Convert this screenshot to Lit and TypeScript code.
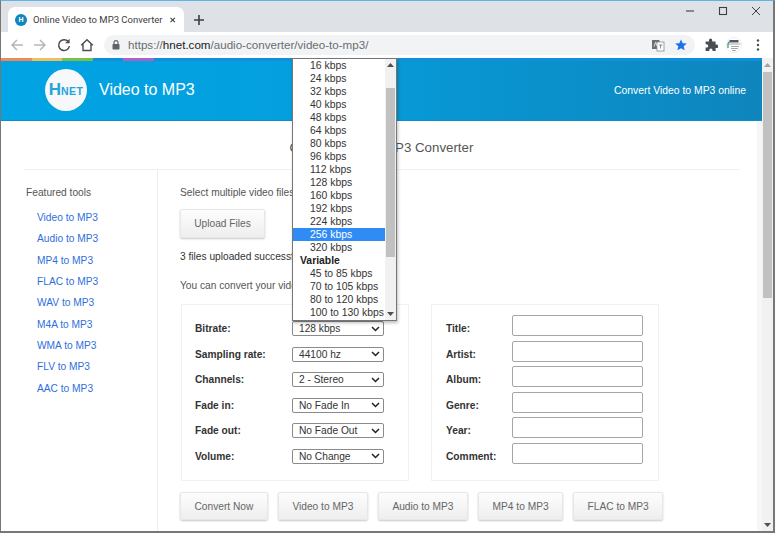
import { LitElement, css, html, svg } from "lit";
import { customElement } from "lit/decorators.js";

const LINKS = ["Video to MP3", "Audio to MP3", "MP4 to MP3", "FLAC to MP3", "WAV to MP3", "M4A to MP3", "WMA to MP3", "FLV to MP3", "AAC to MP3"];
const SELECTS = [
  ["Bitrate:", "128 kbps"],
  ["Sampling rate:", "44100 hz"],
  ["Channels:", "2 - Stereo"],
  ["Fade in:", "No Fade In"],
  ["Fade out:", "No Fade Out"],
  ["Volume:", "No Change"],
];
const TAGS = ["Title:", "Artist:", "Album:", "Genre:", "Year:", "Comment:"];
const BUTTONS = ["Convert Now", "Video to MP3", "Audio to MP3", "MP4 to MP3", "FLAC to MP3"];
const RATES = ["16", "24", "32", "40", "48", "64", "80", "96", "112", "128", "160", "192", "224", "256", "320"];
const VARIABLE = ["45 to 85", "70 to 105", "80 to 120", "100 to 130"];
const STRIP = ["#ee8a5a", "#f2bd5c", "#7cc043", "#0f8fdc", "#a864c4"];

const icon = (w: number, h: number, body: unknown) =>
  html`<svg width="${w}" height="${h}" viewBox="0 0 ${w} ${h}">${body}</svg>`;

@customElement("app-root")
export class AppRoot extends LitElement {
  render() {
    return html`<div class="window">
      <div class="tabstrip">
        <div class="tab">
          <span class="favicon">H</span>
          <span class="tab-title">Online Video to MP3 Converter</span>
          ${icon(10, 10, svg`<path d="M2 2l6 6M8 2l-6 6" stroke="#3c4043" stroke-width="1.4" fill="none"/>`)}
        </div>
        <div class="newtab">
          ${icon(12, 12, svg`<path d="M6 1v10M1 6h10" stroke="#3c4043" stroke-width="1.6" fill="none"/>`)}
        </div>
        <div class="controls">
          ${icon(10, 10, svg`<path d="M1 5h8" stroke="#3c4043" stroke-width="1.1"/>`)}
          ${icon(10, 10, svg`<rect x="1.5" y="1.5" width="7" height="7" fill="none" stroke="#3c4043" stroke-width="1.1"/>`)}
          ${icon(10, 10, svg`<path d="M1 1l8 8M9 1l-8 8" stroke="#3c4043" stroke-width="1"/>`)}
        </div>
      </div>
      <div class="toolbar">
        ${icon(16, 16, svg`<path d="M14 8H3M8 3L3 8l5 5" fill="none" stroke="#b4b7bb" stroke-width="1.5"/>`)}
        ${icon(16, 16, svg`<path d="M2 8h11M8 3l5 5-5 5" fill="none" stroke="#b4b7bb" stroke-width="1.5"/>`)}
        ${icon(16, 16, svg`<path d="M12.6 5.2A5.4 5.4 0 1 0 13.4 9" fill="none" stroke="#4a4d51" stroke-width="1.5"/><path d="M13.6 1.8v4.5H9.1z" fill="#4a4d51"/>`)}
        ${icon(16, 16, svg`<path d="M2.2 8.3L8 2.8l5.8 5.5M4 7v6.5h8V7" fill="none" stroke="#4a4d51" stroke-width="1.4"/>`)}
        <div class="omnibox">
          ${icon(10, 12, svg`<path d="M3 5V3.6a2 2 0 0 1 4 0V5" fill="none" stroke="#5f6368" stroke-width="1.1"/><rect x="1.5" y="5" width="7" height="5.6" rx=".8" fill="#5f6368"/>`)}
          <span class="url">https://<b>hnet.com</b>/audio-converter/video-to-mp3/</span>
          <span class="grow"></span>
          ${icon(14, 14, svg`<rect x="1" y="2" width="7.5" height="9" fill="#6b6f74"/><rect x="6" y="4" width="7" height="9" fill="#fff" stroke="#8a8d91" stroke-width=".8"/><path d="M3 8.5l1.7-4.2 1.7 4.2" fill="none" stroke="#fff" stroke-width=".8"/><path d="M8 7h3.5M9.6 7v3.6" stroke="#6b6f74" stroke-width=".8"/>`)}
          ${icon(14, 14, svg`<path d="M7 1.4l1.7 3.8 4.1.4-3.1 2.7.9 4-3.6-2.1-3.6 2.1.9-4L1.2 5.6l4.1-.4z" fill="#1a73e8"/>`)}
        </div>
        <div class="ext">
          ${icon(14, 14, svg`<path d="M5 2.2a1.6 1.6 0 0 1 3.2 0V3.4h3.4v3.2h1a1.7 1.7 0 0 1 0 3.4h-1v3H8.5v-1a1.6 1.6 0 0 0-3.2 0v1H1.6V9.6h1a1.7 1.7 0 0 0 0-3.4h-1V3.4H5z" fill="#4a4d51"/>`)}
          ${icon(16, 16, svg`<circle cx="8" cy="8" r="7.6" fill="#fff" stroke="#e2e2e2" stroke-width=".6"/><path d="M3.5 3h9v2.5h-9z" fill="#55595e"/><path d="M1.6 7h12.8M5 9.5h8M5 11.5h7M6 13.5h4" stroke="#8d9195" stroke-width=".8"/><path d="M2 11V6.5" stroke="#3d9d5a" stroke-width="1.2"/><path d="M2 6.5L3.5 4.5" stroke="#2f6fdc" stroke-width="1.2"/>`)}
          <span class="dots">${icon(4, 14, svg`<circle cx="2" cy="2.5" r="1.2" fill="#4a4d51"/><circle cx="2" cy="7" r="1.2" fill="#4a4d51"/><circle cx="2" cy="11.5" r="1.2" fill="#4a4d51"/>`)}</span>
        </div>
      </div>
      <div class="viewport">
        <div class="page">
          <div class="strip">${STRIP.map((c) => html`<i style="background:${c}"></i>`)}</div>
          <header class="banner">
            <div class="logo">H<small>NET</small></div>
            <div class="brand">Video to MP3</div>
            <div class="grow"></div>
            <div class="slogan">Convert Video to MP3 online</div>
          </header>
          <div class="body">
            <h1>Online Video to MP3 Converter</h1>
            <div class="columns">
              <nav class="side">
                <div class="side-title">Featured tools</div>
                ${LINKS.map((l) => html`<a>${l}</a>`)}
              </nav>
              <main class="content">
                <p class="first">Select multiple video files</p>
                <button class="btn upload">Upload Files</button>
                <p class="dark">3 files uploaded successfully</p>
                <p>You can convert your videos</p>
                <div class="panels">
                  <div class="panel">
                    ${SELECTS.map(
                      ([label, value]) => html`<div class="row">
                        <label>${label}</label>
                        <div class="select">
                          <span>${value}</span>
                          ${icon(9, 6, svg`<path d="M1 1l3.5 3.5L8 1" fill="none" stroke="#222" stroke-width="1.5"/>`)}
                        </div>
                      </div>`
                    )}
                  </div>
                  <div class="panel tags">
                    ${TAGS.map((t) => html`<div class="row"><label>${t}</label><div class="input"></div></div>`)}
                  </div>
                </div>
                <div class="actions">${BUTTONS.map((b) => html`<button class="btn">${b}</button>`)}</div>
              </main>
            </div>
          </div>
        </div>
        <div class="scrollbar">
          <div class="arrow">${icon(7, 4, svg`<path d="M3.5 0L7 4H0z" fill="#a3a3a3"/>`)}</div>
          <div class="thumb"></div>
          <div class="grow"></div>
          <div class="arrow">${icon(7, 4, svg`<path d="M0 0h7L3.5 4z" fill="#505050"/>`)}</div>
        </div>
      </div>
      <div class="menu">
        <div class="options">
          ${RATES.map((r) => html`<div class="opt ${r === "256" ? "sel" : ""}">${r} kbps</div>`)}
          <div class="group">Variable</div>
          ${VARIABLE.map((r) => html`<div class="opt">${r} kbps</div>`)}
        </div>
        <div class="menu-bar">
          <div class="menu-arrow">${icon(7, 4, svg`<path d="M3.5 0L7 4H0z" fill="#505050"/>`)}</div>
          <div class="menu-thumb"></div>
          <div class="grow"></div>
          <div class="menu-arrow">${icon(7, 4, svg`<path d="M0 0h7L3.5 4z" fill="#505050"/>`)}</div>
        </div>
      </div>
    </div>`;
  }

  static styles = css`
    :host {
      display: block;
      width: 775px;
      height: 533px;
      overflow: hidden;
      font-family: "Liberation Sans", Arial, sans-serif;
      font-size: 10.2px;
      color: #555;
    }
    .window {
      position: relative;
      box-sizing: border-box;
      width: 775px;
      height: 533px;
      display: flex;
      flex-direction: column;
      background: #fff;
      border-top: 1px solid #5cb6ea;
      border-left: 1px solid #777;
      border-right: 2px solid #777;
      border-bottom: 2px solid #777;
    }
    .grow {
      flex: 1;
    }
    .tabstrip {
      height: 31px;
      flex: none;
      display: flex;
      align-items: flex-end;
      background: #dee1e6;
      padding-left: 7px;
    }
    .tab {
      height: 25px;
      width: 176px;
      flex: none;
      box-sizing: border-box;
      background: #fff;
      border-radius: 7px 7px 0 0;
      display: flex;
      align-items: center;
      padding: 0 8px 0 7px;
      gap: 6px;
    }
    .favicon {
      width: 12px;
      height: 12px;
      flex: none;
      border-radius: 50%;
      background: #0f87bd;
      color: #fff;
      font-size: 7px;
      font-weight: bold;
      display: flex;
      align-items: center;
      justify-content: center;
    }
    .tab-title {
      flex: 1;
      font-family: Roboto, "Liberation Sans", sans-serif;
      font-size: 9.5px;
      color: #3c4043;
      white-space: nowrap;
    }
    .newtab {
      height: 25px;
      display: flex;
      align-items: center;
      margin-left: 9px;
    }
    .controls {
      margin-left: auto;
      align-self: flex-start;
      display: flex;
      gap: 23px;
      padding: 5px 12px 0 0;
    }
    .toolbar {
      height: 26px;
      flex: none;
      box-sizing: border-box;
      display: flex;
      align-items: center;
      gap: 7px;
      padding: 0 0 1px 8px;
      background: #fff;
    }
    .toolbar > svg:nth-child(3) {
      margin-left: 1px;
    }
    .omnibox {
      width: 591px;
      height: 20px;
      flex: none;
      margin-left: 2px;
      box-sizing: border-box;
      border-radius: 10px;
      background: #f1f3f4;
      display: flex;
      align-items: center;
      gap: 7px;
      padding: 0 7px;
      font-size: 11.6px;
      color: #6a6d71;
    }
    .url b {
      font-weight: normal;
      color: #202124;
    }
    .omnibox svg:last-child {
      margin-left: 2px;
    }
    .ext {
      display: flex;
      align-items: center;
      gap: 8px;
      margin-left: 2px;
    }
    .dots {
      display: flex;
      margin-left: 6px;
    }
    .viewport {
      flex: 1;
      min-height: 0;
      display: flex;
    }
    .page {
      flex: 1;
      min-width: 0;
      overflow: hidden;
      display: flex;
      flex-direction: column;
    }
    .strip {
      height: 3px;
      flex: none;
      display: flex;
      background: #0f8fdc;
    }
    .strip i {
      width: 30.5px;
      display: block;
    }
    .banner {
      height: 60px;
      flex: none;
      box-sizing: border-box;
      display: flex;
      align-items: center;
      padding: 0 16px 1px 44px;
      background: linear-gradient(90deg, #00a3e3 0%, #04a0df 35%, #0f85bd 100%);
      border-bottom: 1px solid #0a8fc9;
      color: #fff;
    }
    .logo {
      width: 42px;
      height: 42px;
      border-radius: 50%;
      background: #f6f8f9;
      color: #25a4dc;
      font-size: 17px;
      font-weight: bold;
      display: flex;
      align-items: baseline;
      justify-content: center;
      line-height: 42px;
    }
    .logo small {
      font-size: 10.5px;
      letter-spacing: 0.4px;
    }
    .brand {
      font-size: 16px;
      margin-left: 12px;
    }
    .slogan {
      font-size: 10.4px;
    }
    .body {
      flex: 1;
      border-right: 5px solid #f6f6f6;
    }
    h1 {
      margin: 0 17px 0 22px;
      height: 49px;
      box-sizing: border-box;
      padding-top: 19px;
      border-bottom: 1px solid #f2f2f2;
      font-size: 13.3px;
      line-height: 15px;
      font-weight: normal;
      text-align: center;
      color: #555;
    }
    .columns {
      display: flex;
    }
    .side {
      width: 157px;
      flex: none;
      box-sizing: border-box;
      padding: 16px 0 0 25px;
      border-right: 1px solid #eee;
      height: 400px;
    }
    .side-title {
      line-height: 13px;
      margin-bottom: 12px;
    }
    .side a {
      display: block;
      margin-left: 11px;
      color: #2f6fdc;
      line-height: 13px;
      margin-bottom: 8.35px;
    }
    .content {
      padding: 16px 0 0 22px;
      flex: 1;
      min-width: 0;
    }
    p {
      margin: 0;
      line-height: 13px;
    }
    .first {
      margin-bottom: 10px;
    }
    .dark {
      color: #333;
      margin: 12px 0 16px;
    }
    .btn {
      box-sizing: border-box;
      height: 28px;
      padding: 0 13.5px;
      border: 1px solid #e7e7e7;
      border-radius: 2px;
      background: linear-gradient(#fdfdfd, #eeeeee);
      box-shadow: 0 1px 2px rgba(0, 0, 0, 0.22);
      font-family: inherit;
      font-size: 10.2px;
      color: #666;
    }
    .upload {
      display: block;
      width: 85px;
      height: 29px;
      padding: 0;
    }
    .panels {
      display: flex;
      gap: 22px;
      margin: 12px 0 11px 1px;
    }
    .panel {
      box-sizing: border-box;
      width: 228px;
      height: 177px;
      padding: 13px 0 0 13px;
      border: 1px solid #f1f1f1;
      display: flex;
      flex-direction: column;
      gap: 4.6px;
    }
    .row {
      height: 21px;
      display: flex;
      align-items: center;
      flex: none;
    }
    label {
      width: 97px;
      flex: none;
      font-weight: bold;
      color: #333;
    }
    .select {
      box-sizing: border-box;
      width: 92px;
      height: 15px;
      border: 1px solid #8b8b8b;
      border-radius: 2px;
      display: flex;
      align-items: center;
      justify-content: space-between;
      padding: 0 3px 0 6px;
      color: #333;
      background: #fff;
    }
    .tags {
      padding-left: 14px;
    }
    .tags label {
      width: 66px;
    }
    .input {
      box-sizing: border-box;
      width: 131px;
      height: 21px;
      margin-bottom: 6px;
      flex: none;
      border: 1px solid #a6a6a6;
      border-radius: 2px;
      background: #fff;
    }
    .actions {
      display: flex;
      gap: 10px;
    }
    .scrollbar {
      width: 11px;
      flex: none;
      background: #f1f1f1;
      display: flex;
      flex-direction: column;
    }
    .arrow {
      height: 13px;
      flex: none;
      display: flex;
      align-items: center;
      justify-content: center;
    }
    .thumb {
      height: 226px;
      margin: 1px 1px 0;
      background: #c1c1c1;
    }
    .menu {
      position: absolute;
      left: 291px;
      top: 57px;
      width: 105px;
      height: 263px;
      box-sizing: border-box;
      display: flex;
      background: #fff;
      border: 1px solid #767676;
      box-shadow: 1px 2px 3px rgba(0, 0, 0, 0.25);
      color: #333;
      font-size: 10.4px;
    }
    .options {
      width: 92px;
      flex: none;
      overflow: hidden;
    }
    .opt {
      height: 13px;
      line-height: 13px;
      padding-left: 17px;
      white-space: nowrap;
    }
    .sel {
      background: #2f8cf5;
      color: #fff;
    }
    .group {
      height: 13px;
      line-height: 13px;
      padding-left: 7px;
      font-weight: bold;
      color: #222;
    }
    .menu-bar {
      flex: 1;
      background: #f1f1f1;
      display: flex;
      flex-direction: column;
    }
    .menu-arrow {
      height: 12px;
      flex: none;
      display: flex;
      align-items: center;
      justify-content: center;
    }
    .menu-thumb {
      margin: 17px 1px 0;
      height: 169px;
      background: #c1c1c1;
    }
  `;
}
